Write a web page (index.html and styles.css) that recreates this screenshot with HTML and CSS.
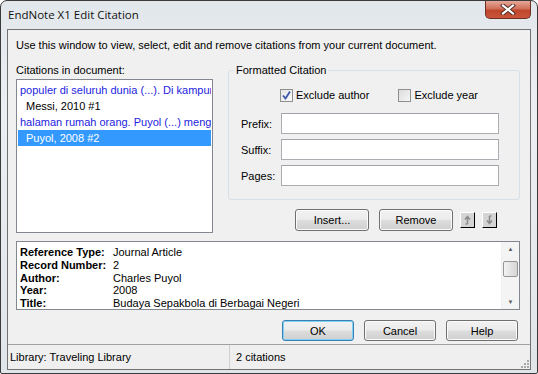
FILE: index.html
```html
<!DOCTYPE html>
<html>
<head>
    <title>EndNote X1 Edit Citation</title>
    <meta charset="UTF-8">
    <link rel="stylesheet" href="styles.css">
</head>
<body>
    <div class="window">
        <div class="titlebar">
            <span class="title">EndNote X1 Edit Citation</span>
            <span class="close-btn">
                <svg width="16" height="11" viewBox="0 0 16 11">
                    <path d="M3 1.5 L13 9.5 M13 1.5 L3 9.5" stroke="#4a2a26" stroke-width="4" stroke-linecap="square"/>
                    <path d="M3 1.5 L13 9.5 M13 1.5 L3 9.5" stroke="#ffffff" stroke-width="2.2" stroke-linecap="square"/>
                </svg>
            </span>
        </div>
        <div class="client">
            <div class="intro">Use this window to view, select, edit and remove citations from your current document.</div>

            <div class="main">
                <div class="left">
                    <div class="list-label">Citations in document:</div>
                    <div class="listbox">
                        <div class="item text">populer di seluruh dunia (...). Di kampung</div>
                        <div class="item cite">Messi, 2010 #1</div>
                        <div class="item text">halaman rumah orang. Puyol (...) menguasai</div>
                        <div class="item cite selected">Puyol, 2008 #2</div>
                    </div>
                </div>
                <div class="right">
                    <fieldset class="group">
                        <legend>Formatted Citation</legend>
                        <div class="checks">
                            <label class="check">
                                <span class="box checked">
                                    <svg width="11" height="11" viewBox="0 0 11 11"><path d="M2 5.5 L4.5 8.5 L9 1.5" fill="none" stroke="#3d57a8" stroke-width="1.8"/></svg>
                                </span>
                                Exclude author
                            </label>
                            <label class="check">
                                <span class="box"></span>
                                Exclude year
                            </label>
                        </div>
                        <div class="field"><span class="field-label">Prefix:</span><span class="input"></span></div>
                        <div class="field"><span class="field-label">Suffix:</span><span class="input"></span></div>
                        <div class="field"><span class="field-label">Pages:</span><span class="input"></span></div>
                    </fieldset>
                    <div class="actions">
                        <button class="btn">Insert...</button>
                        <button class="btn">Remove</button>
                        <span class="mini">
                            <svg width="9" height="10" viewBox="0 0 9 10"><path d="M4.5 9 L4.5 2 M2 4.5 L4.5 1.5 L7 4.5 M4.5 9 L2.5 9" fill="none" stroke="#8c8c8c" stroke-width="1.6"/></svg>
                        </span>
                        <span class="mini">
                            <svg width="9" height="10" viewBox="0 0 9 10"><path d="M4.5 1 L4.5 8 M2 5.5 L4.5 8.5 L7 5.5 M4.5 1 L6.5 1" fill="none" stroke="#8c8c8c" stroke-width="1.6"/></svg>
                        </span>
                    </div>
                </div>
            </div>

            <div class="preview">
                <div class="preview-text">
                    <b>Reference Type:</b><span>Journal Article</span>
                    <b>Record Number:</b><span>2</span>
                    <b>Author:</b><span>Charles Puyol</span>
                    <b>Year:</b><span>2008</span>
                    <b>Title:</b><span>Budaya Sepakbola di Berbagai Negeri</span>
                </div>
                <div class="vscroll">
                    <span class="arrow">&#9650;</span>
                    <span class="track"><span class="thumb"></span></span>
                    <span class="arrow">&#9660;</span>
                </div>
            </div>

            <div class="buttons">
                <button class="btn wide default">OK</button>
                <button class="btn wide">Cancel</button>
                <button class="btn wide">Help</button>
            </div>

            <div class="statusbar">
                <span class="status-cell lib">Library: Traveling Library</span>
                <span class="status-cell">2 citations</span>
                <span class="grip">
                    <svg width="10" height="10" viewBox="0 0 10 10" fill="#a9a9a9">
                        <rect x="7" y="1" width="2" height="2"/>
                        <rect x="4" y="4" width="2" height="2"/><rect x="7" y="4" width="2" height="2"/>
                        <rect x="1" y="7" width="2" height="2"/><rect x="4" y="7" width="2" height="2"/><rect x="7" y="7" width="2" height="2"/>
                    </svg>
                </span>
            </div>
        </div>
    </div>
</body>
</html>
```

FILE: styles.css
```css
body {
    margin: 0;
    background: #ffffff;
    font-family: "Liberation Sans", Arial, sans-serif;
    font-size: 11px;
    color: #000;
}
.window {
    width: 538px;
    height: 374px;
    box-sizing: border-box;
    border: 1px solid #3a3a3a;
    border-radius: 7px 7px 2px 2px;
    background: linear-gradient(180deg, #e2e7ec 0%, #eceff2 30%, #e0e5ea 100%);
    padding: 0 6px 3px 6px;
    display: flex;
    flex-direction: column;
}
.titlebar {
    height: 28px;
    display: flex;
    justify-content: space-between;
    align-items: flex-start;
}
.title {
    font-family: "Open Sans", "Noto Sans", sans-serif;
    font-size: 11.5px;
    padding: 6px 0 0 1px;
    color: #111;
}
.close-btn {
    width: 46px;
    height: 18px;
    box-sizing: border-box;
    margin-right: 0;
    border: 1px solid #6e3023;
    border-top: none;
    border-radius: 0 0 5px 5px;
    background: linear-gradient(180deg, #e6a898 0%, #d0705a 45%, #c0462c 55%, #c9553a 100%);
    display: flex;
    align-items: center;
    justify-content: center;
}
.client {
    flex: 1;
    border: 1px solid #717171;
    background: #f0f0f0;
    display: flex;
    flex-direction: column;
}
.intro {
    margin: 8px 8px 0;
    line-height: 14px;
}
.main {
    display: flex;
    margin: 11px 10px 0 8px;
}
.left {
    width: 197px;
}
.list-label {
    line-height: 14px;
    margin-bottom: 2px;
}
.listbox {
    height: 154px;
    box-sizing: border-box;
    border: 1px solid #828790;
    background: #fff;
    padding: 2px 1px;
    overflow: hidden;
}
.item {
    height: 16px;
    line-height: 16px;
    white-space: nowrap;
    overflow: hidden;
}
.item.text {
    color: #2323e0;
    padding-left: 2px;
}
.item.cite {
    padding-left: 8px;
}
.item.selected {
    background: #3399ff;
    color: #fff;
}
.right {
    width: 292px;
    margin-left: 15px;
}
.group {
    margin: 0;
    padding: 6px 0 13px 0;
    height: 137px;
    box-sizing: border-box;
    border: 1px solid #d5dfe5;
    border-radius: 3px;
    min-width: 0;
}
.group legend {
    padding: 0 2px;
    margin-left: 5px;
    line-height: 14px;
}
.checks {
    display: flex;
    height: 14px;
    align-items: center;
    padding-left: 51px;
    margin-top: 5px;
}
.check {
    display: flex;
    align-items: center;
    gap: 3px;
}
.check + .check {
    margin-left: 29px;
}
.box {
    width: 13px;
    height: 13px;
    box-sizing: border-box;
    border: 1px solid #8e8f8f;
    background: linear-gradient(135deg, #dcdcdc, #f6f6f6);
    display: flex;
    align-items: center;
    justify-content: center;
}
.box.checked {
    background: linear-gradient(135deg, #e4e4e4, #fafafa);
}
.field {
    display: flex;
    align-items: center;
    margin-top: 5px;
}
.checks + .field {
    margin-top: 11px;
}
.field-label {
    width: 40px;
    padding-left: 12px;
}
.input {
    width: 218px;
    height: 21px;
    box-sizing: border-box;
    border: 1px solid #abadb3;
    border-top-color: #a0a3a9;
    background: #fff;
}
.actions {
    display: flex;
    align-items: center;
    margin-top: 9px;
    padding-left: 67px;
    height: 22px;
}
.btn {
    font-family: "Liberation Sans", Arial, sans-serif;
    font-size: 11px;
    color: #000;
    width: 74px;
    height: 22px;
    padding: 0;
    border: 1px solid #707070;
    border-radius: 3px;
    background: linear-gradient(180deg, #f2f2f2 0%, #ebebeb 48%, #dddddd 52%, #cfcfcf 100%);
    box-shadow: inset 0 0 0 1px #fbfbfb;
}
.actions .btn + .btn {
    margin-left: 10px;
}
.mini {
    width: 15px;
    height: 16px;
    box-sizing: border-box;
    border-top: 1px solid #fff;
    border-left: 1px solid #fff;
    border-right: 1px solid #000;
    border-bottom: 1px solid #000;
    background: #d4d4d4;
    display: flex;
    align-items: center;
    justify-content: center;
    margin-left: 7px;
}
.mini + .mini {
    margin-left: 7px;
}
.preview {
    display: flex;
    margin: 8px 10px 0 8px;
    height: 69px;
    box-sizing: border-box;
    border: 1px solid #828790;
    background: #fff;
}
.preview-text {
    flex: 1;
    display: grid;
    grid-template-columns: 93px 1fr;
    grid-auto-rows: 12.75px;
    padding: 4px 0 0 3px;
    line-height: 13px;
    overflow: hidden;
    white-space: nowrap;
}
.vscroll {
    width: 17px;
    display: flex;
    flex-direction: column;
    background: #f4f4f4;
    border-left: 1px solid #f0f0f0;
}
.arrow {
    height: 14px;
    font-size: 6px;
    color: #5a5a5a;
    display: flex;
    align-items: center;
    justify-content: center;
}
.track {
    flex: 1;
    padding-top: 5px;
}
.thumb {
    display: block;
    margin: 0 1px;
    height: 14px;
    border: 1px solid #959595;
    border-radius: 2px;
    background: linear-gradient(90deg, #f3f3f3, #e2e2e2 50%, #d6d6d6);
}
.buttons {
    display: flex;
    justify-content: flex-end;
    gap: 10px;
    margin: 10px 12px 0 0;
}
.btn.wide {
    width: 72px;
    height: 21px;
}
.btn.default {
    border-color: #3c7fb1;
    box-shadow: inset 0 0 0 1px #7ed2f6;
}
.statusbar {
    margin-top: auto;
    height: 25px;
    box-sizing: border-box;
    border-top: 1px solid #a0a0a0;
    display: flex;
    align-items: center;
    background: #efefef;
}
.status-cell {
    padding-left: 2px;
}
.status-cell.lib {
    width: 219px;
    border-right: 1px solid #cfcfcf;
    height: 24px;
    line-height: 24px;
    margin-right: 4px;
}
.grip {
    margin-left: auto;
    align-self: flex-end;
    display: flex;
}
```
